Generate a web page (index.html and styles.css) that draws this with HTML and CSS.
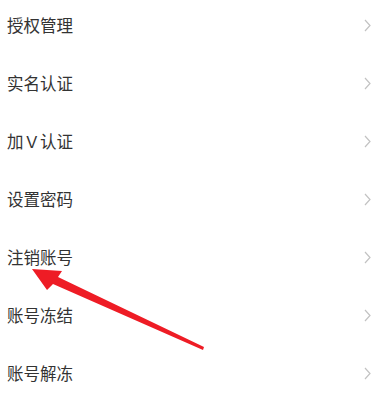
FILE: index.html
```html
<!DOCTYPE html>
<html lang="zh-CN">
<head>
<meta charset="utf-8">
<link rel="stylesheet" href="styles.css">
</head>
<body>
<div class="page">
  <ul class="list">
    <li class="row"><span class="label">授权管理</span><svg class="chev" viewBox="0 0 7 13"><path d="M1 1 L6 6.5 L1 12"/></svg></li>
    <li class="row"><span class="label">实名认证</span><svg class="chev" viewBox="0 0 7 13"><path d="M1 1 L6 6.5 L1 12"/></svg></li>
    <li class="row"><span class="label">加Ｖ认证</span><svg class="chev" viewBox="0 0 7 13"><path d="M1 1 L6 6.5 L1 12"/></svg></li>
    <li class="row"><span class="label">设置密码</span><svg class="chev" viewBox="0 0 7 13"><path d="M1 1 L6 6.5 L1 12"/></svg></li>
    <li class="row"><span class="label">注销账号</span><svg class="chev" viewBox="0 0 7 13"><path d="M1 1 L6 6.5 L1 12"/></svg></li>
    <li class="row"><span class="label">账号冻结</span><svg class="chev" viewBox="0 0 7 13"><path d="M1 1 L6 6.5 L1 12"/></svg></li>
    <li class="row"><span class="label">账号解冻</span><svg class="chev" viewBox="0 0 7 13"><path d="M1 1 L6 6.5 L1 12"/></svg></li>
  </ul>
  <svg class="arrow" viewBox="0 0 375 411" width="375" height="411">
    <polygon points="32,269 62,271 58,277 204,347 203,350 53,284 47,290" fill="#ee1c25"/>
  </svg>
</div>
</body>
</html>
```
FILE: styles.css
```css
html, body {
  margin: 0;
  padding: 0;
  background: #fff;
}
.page {
  position: relative;
  width: 375px;
  height: 411px;
  overflow: hidden;
}
.list {
  list-style: none;
  margin: -4px 0 0 0;
  padding: 0;
}
.row {
  height: 58px;
  display: flex;
  align-items: center;
  justify-content: space-between;
  padding: 0 4px 0 7px;
}
.label {
  font-family: "Noto Sans CJK SC", "Noto Sans", sans-serif;
  font-size: 16.5px;
  color: #333;
  line-height: 1;
}
.chev {
  width: 7px;
  height: 13px;
  fill: none;
  stroke: #c2c2c2;
  stroke-width: 1.2;
}
.arrow {
  position: absolute;
  left: 0;
  top: 0;
}
```
